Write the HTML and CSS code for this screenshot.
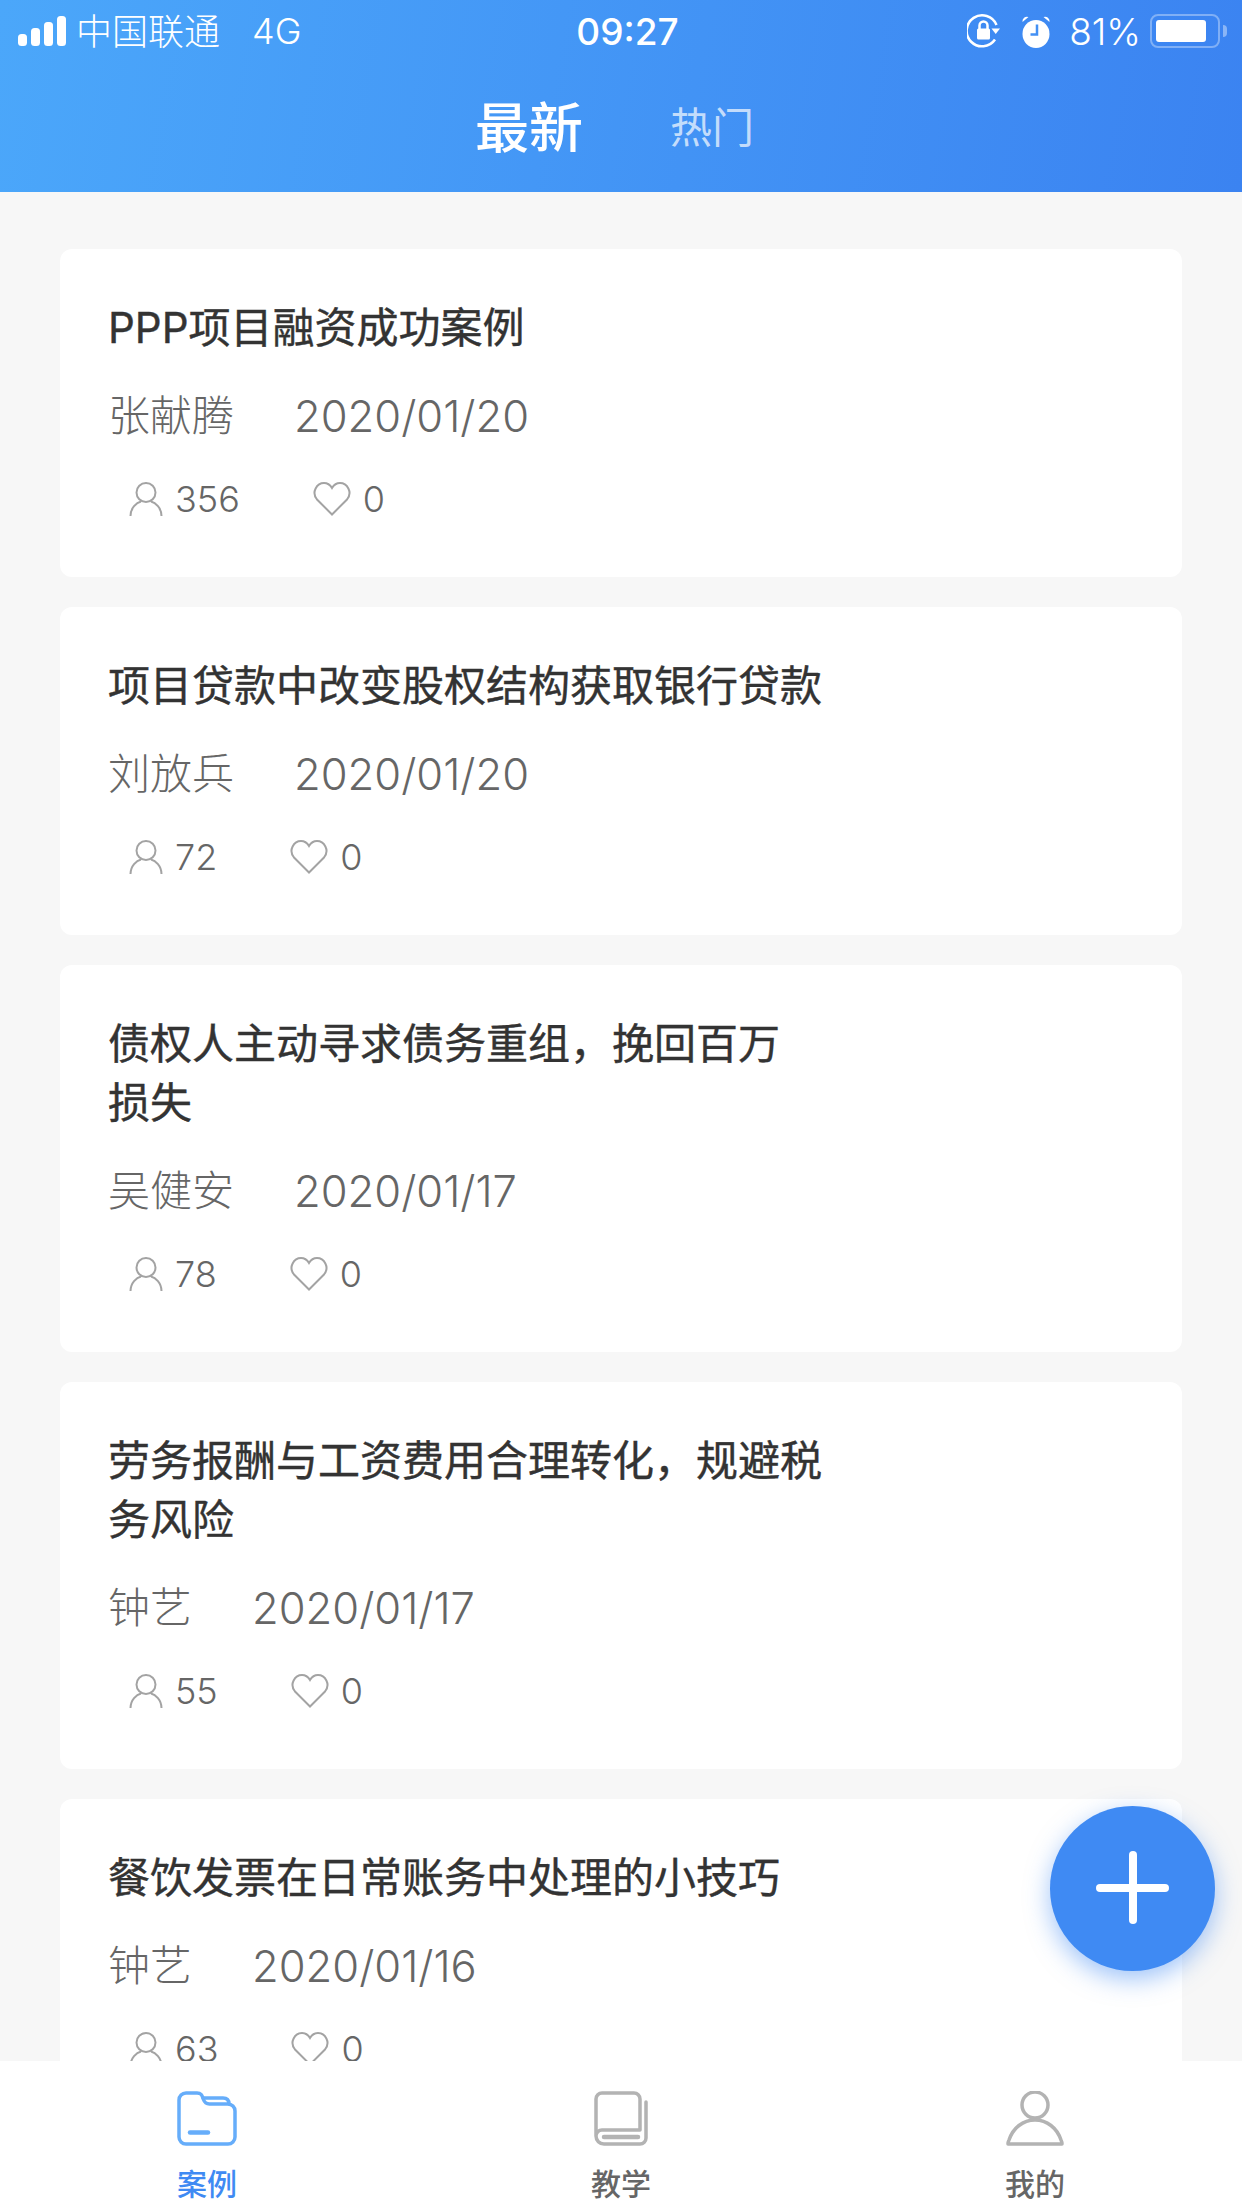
FILE: index.html
```html
<!DOCTYPE html>
<html lang="zh-CN">
<head>
  <meta charset="UTF-8">
  <meta name="viewport" content="width=device-width, initial-scale=1.0">
  <title>案例</title>
  <link rel="stylesheet" href="styles.css">
</head>
<body>
  <div class="page">
    <!-- Header -->
    <header class="header">
      <div class="status-bar">
        <div class="status-left">
          <svg class="signal" viewBox="0 0 48 30" width="48" height="30">
            <rect x="0" y="18" width="9" height="12" rx="3.5" />
            <rect x="13" y="12" width="9" height="18" rx="3.5" />
            <rect x="26" y="6" width="9" height="24" rx="3.5" />
            <rect x="39" y="0" width="9" height="30" rx="3.5" />
          </svg>
          <span class="carrier">中国联通</span>
          <span class="network">4G</span>
        </div>
        <div class="status-time">09:27</div>
        <div class="status-right">
          <svg class="lock-icon" viewBox="0 0 34 36" width="34" height="36">
            <path class="lock-ring" d="M28 26.5A15.5 15.5 0 1 1 29.5 12" />
            <path class="lock-solid" d="M24.5 15.5h8.500l-4.300 5.500z" />
            <path class="lock-shackle" d="M12.500 16v-3.500a4 4 0 0 1 8 0V16" />
            <rect class="lock-solid" x="10" y="15.500" width="13" height="11" rx="1.500" />
          </svg>
          <svg class="alarm-icon" viewBox="0 0 32 36" width="32" height="36">
            <path class="alarm-solid" d="M2.500 9a4.500 4.500 0 0 1 6-5zM29.500 9a4.500 4.500 0 0 0-6-5z" />
            <ellipse class="alarm-solid" cx="16" cy="21" rx="13.500" ry="14" />
            <path class="alarm-hands" d="M17 11.500V21.500H10.500" />
          </svg>
          <span class="battery-text">81%</span>
          <div class="battery">
            <div class="battery-body"><div class="battery-fill"></div></div>
            <div class="battery-nub"></div>
          </div>
        </div>
      </div>
      <nav class="tabs">
        <span class="tab active">最新</span>
        <span class="tab">热门</span>
      </nav>
    </header>

    <!-- Case list -->
    <main class="list">
      <article class="card">
        <h2 class="card-title">PPP项目融资成功案例</h2>
        <div class="card-meta"><span>张献腾</span><span class="card-date">2020/01/20</span></div>
        <div class="card-stats">
          <span class="stat">
            <svg class="stat-icon" viewBox="0 0 34 36" width="34" height="36"><path d="M17 2a9.500 9.500 0 1 1 0 19a9.500 9.500 0 0 1 0-19zM1.500 35c0-8 6-13.500 10.500-14.500M32.500 35c0-8-6-13.500-10.500-14.500" /></svg>
            <span class="stat-num">356</span>
          </span>
          <span class="stat">
            <svg class="stat-icon heart" viewBox="0 0 38 36" width="38" height="36"><path d="M19 33.500L4 18.500C-2 11 4 2 11 2c4 0 6.500 2.500 8 5c1.500-2.500 4-5 8-5c7 0 13 9 7 16.500z" /></svg>
            <span class="stat-num">0</span>
          </span>
        </div>
      </article>

      <article class="card">
        <h2 class="card-title">项目贷款中改变股权结构获取银行贷款</h2>
        <div class="card-meta"><span>刘放兵</span><span class="card-date">2020/01/20</span></div>
        <div class="card-stats">
          <span class="stat">
            <svg class="stat-icon" viewBox="0 0 34 36" width="34" height="36"><path d="M17 2a9.500 9.500 0 1 1 0 19a9.500 9.500 0 0 1 0-19zM1.500 35c0-8 6-13.500 10.500-14.500M32.500 35c0-8-6-13.500-10.500-14.500" /></svg>
            <span class="stat-num">72</span>
          </span>
          <span class="stat">
            <svg class="stat-icon heart" viewBox="0 0 38 36" width="38" height="36"><path d="M19 33.500L4 18.500C-2 11 4 2 11 2c4 0 6.500 2.500 8 5c1.500-2.500 4-5 8-5c7 0 13 9 7 16.500z" /></svg>
            <span class="stat-num">0</span>
          </span>
        </div>
      </article>

      <article class="card">
        <h2 class="card-title">债权人主动寻求债务重组&#65292;挽回百万<br>损失</h2>
        <div class="card-meta"><span>吴健安</span><span class="card-date">2020/01/17</span></div>
        <div class="card-stats">
          <span class="stat">
            <svg class="stat-icon" viewBox="0 0 34 36" width="34" height="36"><path d="M17 2a9.500 9.500 0 1 1 0 19a9.500 9.500 0 0 1 0-19zM1.500 35c0-8 6-13.500 10.500-14.500M32.500 35c0-8-6-13.500-10.500-14.500" /></svg>
            <span class="stat-num">78</span>
          </span>
          <span class="stat">
            <svg class="stat-icon heart" viewBox="0 0 38 36" width="38" height="36"><path d="M19 33.500L4 18.500C-2 11 4 2 11 2c4 0 6.500 2.500 8 5c1.500-2.500 4-5 8-5c7 0 13 9 7 16.500z" /></svg>
            <span class="stat-num">0</span>
          </span>
        </div>
      </article>

      <article class="card">
        <h2 class="card-title">劳务报酬与工资费用合理转化&#65292;规避税<br>务风险</h2>
        <div class="card-meta"><span>钟艺</span><span class="card-date">2020/01/17</span></div>
        <div class="card-stats">
          <span class="stat">
            <svg class="stat-icon" viewBox="0 0 34 36" width="34" height="36"><path d="M17 2a9.500 9.500 0 1 1 0 19a9.500 9.500 0 0 1 0-19zM1.500 35c0-8 6-13.500 10.500-14.500M32.500 35c0-8-6-13.500-10.500-14.500" /></svg>
            <span class="stat-num">55</span>
          </span>
          <span class="stat">
            <svg class="stat-icon heart" viewBox="0 0 38 36" width="38" height="36"><path d="M19 33.500L4 18.500C-2 11 4 2 11 2c4 0 6.500 2.500 8 5c1.500-2.500 4-5 8-5c7 0 13 9 7 16.500z" /></svg>
            <span class="stat-num">0</span>
          </span>
        </div>
      </article>

      <article class="card">
        <h2 class="card-title">餐饮发票在日常账务中处理的小技巧</h2>
        <div class="card-meta"><span>钟艺</span><span class="card-date">2020/01/16</span></div>
        <div class="card-stats">
          <span class="stat">
            <svg class="stat-icon" viewBox="0 0 34 36" width="34" height="36"><path d="M17 2a9.500 9.500 0 1 1 0 19a9.500 9.500 0 0 1 0-19zM1.500 35c0-8 6-13.500 10.500-14.500M32.500 35c0-8-6-13.500-10.500-14.500" /></svg>
            <span class="stat-num">63</span>
          </span>
          <span class="stat">
            <svg class="stat-icon heart" viewBox="0 0 38 36" width="38" height="36"><path d="M19 33.500L4 18.500C-2 11 4 2 11 2c4 0 6.500 2.500 8 5c1.500-2.500 4-5 8-5c7 0 13 9 7 16.500z" /></svg>
            <span class="stat-num">0</span>
          </span>
        </div>
      </article>
    </main>

    <!-- Add button -->
    <div class="fab"><div class="fab-plus"></div></div>

    <!-- Bottom nav -->
    <footer class="bottom-nav">
      <div class="nav-item active">
        <svg class="nav-icon" viewBox="0 0 60 55" width="60" height="55">
          <path d="M2 9a7 7 0 0 1 7-7h11c5 0 5 3 6.500 6.500c1 3 3 4.500 6 4.500H51a7 7 0 0 1 7 7v26a7 7 0 0 1-7 7H9a7 7 0 0 1-7-7z" />
          <path d="M26 7h20c4 0 6 2 6 6" />
          <path class="nav-dash" d="M13 41.500h18" />
        </svg>
        <span class="nav-label">案例</span>
      </div>
      <div class="nav-item">
        <svg class="nav-icon" viewBox="0 0 54 55" width="54" height="55">
          <path d="M2 45V8a6 6 0 0 1 6-6h32a6 6 0 0 1 6 6v31H8a6 6 0 0 0-6 6a8 8 0 0 0 8 8h36a6 6 0 0 0 6-6V11" />
          <path class="nav-dash" d="M10 46h34" />
        </svg>
        <span class="nav-label">教学</span>
      </div>
      <div class="nav-item">
        <svg class="nav-icon" viewBox="0 0 60 55" width="60" height="55">
          <circle cx="30" cy="14" r="13" />
          <path d="M3 53c0-1 0-2 1-4c4-12 14-20 26-20s22 8 26 20c1 2 1 3 1 4z" />
        </svg>
        <span class="nav-label">我的</span>
      </div>
    </footer>
  </div>
</body>
</html>
```

FILE: styles.css
```css
/* General Reset */
* {
  margin: 0;
  padding: 0;
  box-sizing: border-box;
}

html, body {
  width: 100%;
  height: 100%;
  overflow: hidden;
}

body {
  font-family: 'Inter', 'Noto Sans CJK SC', sans-serif;
  background-color: #f7f7f7;
  color: #333;
}

.page {
  position: relative;
  display: flex;
  flex-direction: column;
  height: 2208px;
  overflow: hidden;
}

/* Header */
.header {
  flex: none;
  height: 192px;
  background: linear-gradient(100deg, #4ba7fa 0%, #3b83f1 100%);
  color: white;
}

.status-bar {
  display: grid;
  grid-template-columns: 1fr auto 1fr;
  align-items: center;
  height: 62px;
  padding: 0 15px 0 18px;
  font-size: 36px;
  font-weight: 300;
}

.status-left, .status-right {
  display: flex;
  align-items: center;
}

.status-right {
  justify-content: flex-end;
}

.signal {
  fill: white;
  margin-right: 10px;
}

.carrier {
  margin-right: 32px;
  margin-bottom: 4px;
}

.status-time {
  font-size: 37px;
  font-weight: 500;
  padding-left: 10px;
}

.lock-icon {
  margin-right: 19px;
}

.lock-ring, .lock-shackle {
  fill: none;
  stroke: white;
  stroke-width: 2.5;
}

.lock-solid, .alarm-solid {
  fill: white;
}

.alarm-icon {
  margin-right: 17px;
}

.alarm-hands {
  fill: none;
  stroke: #4390f4;
  stroke-width: 2.5;
}

.battery-text {
  font-size: 37px;
  margin-right: 9px;
}

.battery {
  display: flex;
  align-items: center;
  gap: 3px;
}

.battery-body {
  width: 70px;
  height: 34px;
  padding: 4px;
  border: 2px solid rgba(255, 255, 255, 0.35);
  border-radius: 8px;
}

.battery-fill {
  width: 50px;
  height: 100%;
  background-color: white;
  border-radius: 3px;
}

.battery-nub {
  width: 4px;
  height: 12px;
  background-color: rgba(255, 255, 255, 0.4);
  border-radius: 0 4px 4px 0;
}

.tabs {
  display: flex;
  justify-content: center;
  align-items: center;
  gap: 87px;
  height: 130px;
  padding-right: 13px;
  padding-bottom: 5px;
}

.tab {
  font-size: 42px;
  color: rgba(255, 255, 255, 0.7);
}

.tab.active {
  font-size: 54px;
  font-weight: 500;
  color: white;
}

/* Case list */
.list {
  flex: 1;
  min-height: 0;
  overflow: hidden;
  padding: 57px 60px 0;
}

.card {
  background-color: white;
  border-radius: 12px;
  padding: 49px 48px 53px;
  margin-bottom: 30px;
}

.card-title {
  font-size: 42px;
  font-weight: 400;
  line-height: 59px;
  color: #333;
  -webkit-text-stroke: 0.4px #333;
}

.card-meta {
  display: flex;
  align-items: center;
  gap: 60px;
  margin-top: 30px;
  font-size: 42px;
  line-height: 58px;
  font-weight: 300;
  color: #666;
}

.card-date {
  font-size: 43.5px;
}

.card-stats {
  display: flex;
  gap: 73px;
  margin-top: 29px;
  padding-left: 21px;
  height: 50px;
  align-items: center;
}

.stat {
  display: flex;
  align-items: center;
  gap: 12px;
}

.stat-icon {
  fill: none;
  stroke: #a3a3a3;
  stroke-width: 2;
}

.stat-num {
  font-size: 36px;
  font-weight: 300;
  color: #666;
}

/* Add button */
.fab {
  position: absolute;
  left: 1050px;
  top: 1806px;
  display: flex;
  justify-content: center;
  align-items: center;
  width: 165px;
  height: 165px;
  padding-bottom: 2px;
  background-color: #3f8af3;
  border-radius: 50%;
  box-shadow: 0 8px 24px rgba(63, 138, 243, 0.5);
}

.fab-plus {
  position: relative;
  width: 73px;
  height: 8px;
  background-color: white;
  border-radius: 4px;
}

.fab-plus::after {
  content: "";
  position: absolute;
  left: 32.5px;
  top: -32.5px;
  width: 8px;
  height: 73px;
  background-color: white;
  border-radius: 4px;
}

/* Bottom nav */
.bottom-nav {
  flex: none;
  display: grid;
  grid-template-columns: repeat(3, 414px);
  height: 147px;
  background-color: white;
  position: relative;
}

.nav-item {
  display: flex;
  flex-direction: column;
  align-items: center;
  padding-top: 30px;
  gap: 20px;
}

.nav-icon {
  fill: none;
  stroke: #b3b3b3;
  stroke-width: 3.5;
  stroke-linejoin: round;
  stroke-linecap: round;
}

.nav-item.active .nav-icon {
  stroke: #66adfa;
}

.nav-dash {
  stroke-width: 4.5;
}

.nav-label {
  font-size: 30px;
  font-weight: 500;
  line-height: 36px;
  color: #666;
}

.nav-item.active .nav-label {
  color: #3f8af3;
}
```
